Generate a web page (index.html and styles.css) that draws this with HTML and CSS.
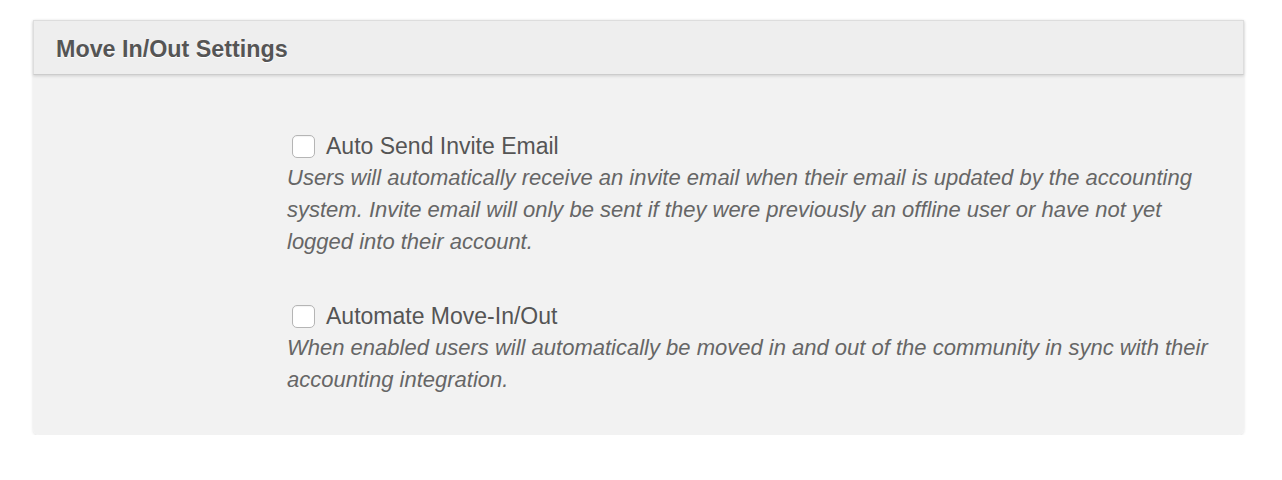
FILE: index.html
```html
<!DOCTYPE html>
<html lang="en">
<head>
  <meta charset="UTF-8" />
  <title>Move In/Out Settings</title>
  <link rel="stylesheet" href="styles.css">
</head>
<body>

  <div class="panel">
    <div class="panel-heading">Move In/Out Settings</div>
    <div class="panel-body">
      <div class="option">
        <label class="option-label">
          <input type="checkbox" id="autoInvite" />
          Auto Send Invite Email
        </label>
        <p class="help">Users will automatically receive an invite email when their email is updated by the accounting system. Invite email will only be sent if they were previously an offline user or have not yet logged into their account.</p>
      </div>
      <div class="option">
        <label class="option-label">
          <input type="checkbox" id="autoMove" />
          Automate Move-In/Out
        </label>
        <p class="help">When enabled users will automatically be moved in and out of the community in sync with their accounting integration.</p>
      </div>
    </div>
  </div>

</body>
</html>
```

FILE: styles.css
```css
body {
  margin: 0;
  background: #fff;
  font-family: "Liberation Sans", Arial, sans-serif;
  color: #555;
}
.panel {
  width: 1211px;
  margin: 20px 0 0 33px;
  border-radius: 0 0 6px 6px;
  box-shadow: 0 1px 3px rgba(0,0,0,0.12);
}
.panel-heading {
  background: #eee;
  border: 1px solid #ddd;
  border-bottom-color: #ccc;
  box-shadow: 0 1px 3px rgba(0,0,0,0.15);
  height: 53px;
  line-height: 57px;
  padding: 0 22px;
  font-size: 23.3px;
  font-weight: bold;
  color: #555;
  text-shadow: 0 1px 0 #fff;
  position: relative;
}
.panel-body {
  background: #f2f2f2;
  border-radius: 0 0 6px 6px;
  padding: 55px 30px 39px 254px;
}
.option + .option {
  margin-top: 42px;
}
.option-label {
  display: flex;
  align-items: center;
  height: 32px;
  font-size: 23px;
  color: #555;
  padding-left: 5px;
}
.option-label input {
  appearance: none;
  -webkit-appearance: none;
  width: 23px;
  height: 23px;
  margin: 0 11px 0 0;
  background: #fff;
  border: 1px solid #b5b5b5;
  border-radius: 5px;
  box-shadow: inset 0 1px 1px rgba(0,0,0,0.05);
}
.help {
  margin: 0;
  font-size: 22px;
  font-style: italic;
  line-height: 32px;
  color: #666;
}
```
